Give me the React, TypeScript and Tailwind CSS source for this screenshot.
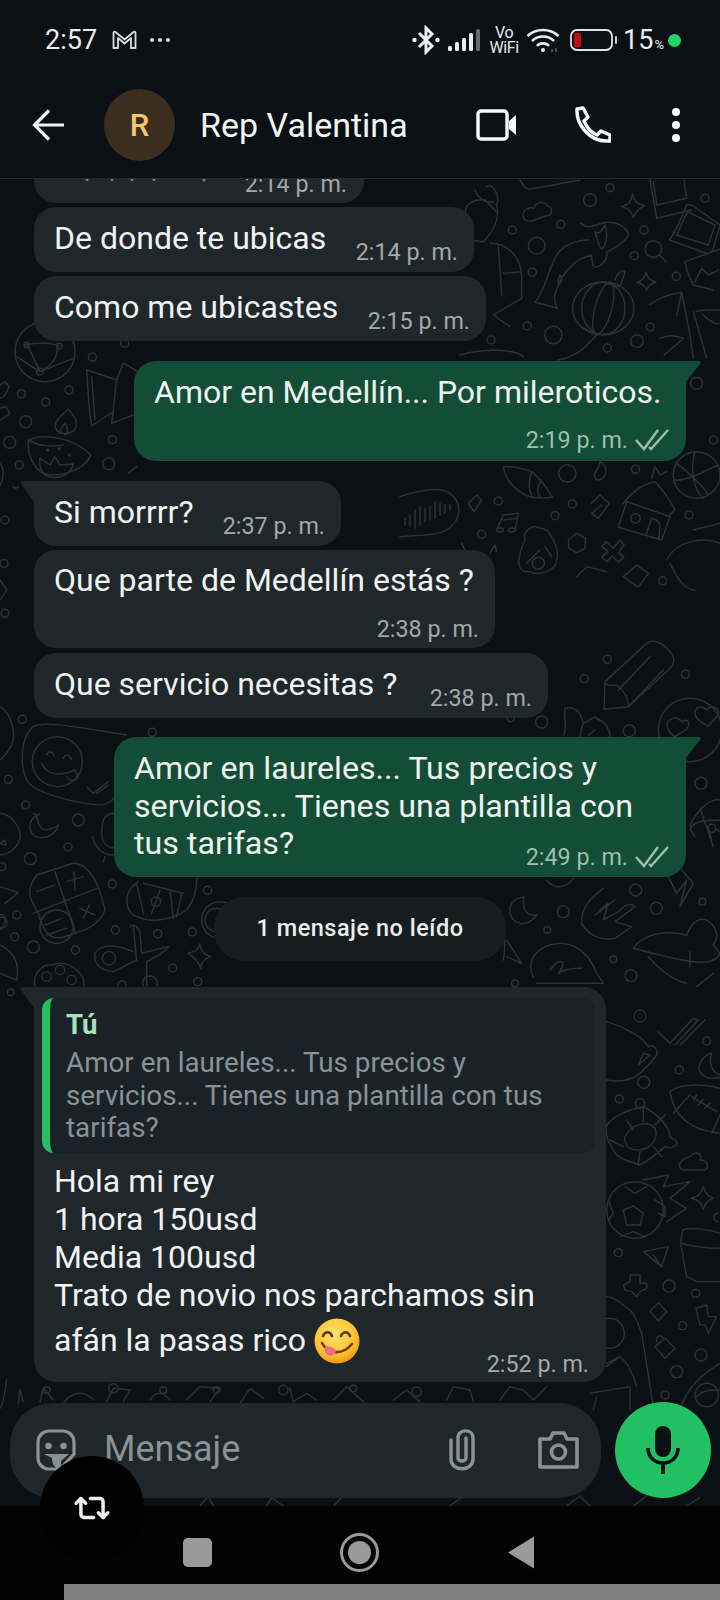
import React from "react";
import { Repeat2 } from "lucide-react";

function Dots({ pts }: { pts: [number, number, number][] }) {
  return (
    <>
      {pts.map(([x, y, r], i) => (
        <circle key={i} cx={x} cy={y} r={r} />
      ))}
    </>
  );
}

function Doodles() {
  return (
    <svg className="absolute left-0 top-0" width="720" height="1600" viewBox="0 0 720 1600" fill="none" stroke="#2d3235" strokeWidth="4.4" strokeLinecap="round" strokeLinejoin="round">
      {/* top right */}
      <g transform="translate(460 175) scale(0.3333)">
        <Dots pts={[[390,75,19],[450,38,12],[157,165,12],[302,148,12],[230,212,25],[217,292,12],[552,165,12],[523,242,12],[649,304,12],[735,70,12],[202,453,12],[280,480,26],[93,495,12],[571,456,12],[531,498,19],[442,519,12]]} />
        <path d="M518 56 C522 80 535 90 555 92 C535 100 525 110 520 128 C515 108 505 100 485 95 C505 90 515 80 518 56Z" />
        <path d="M558 292 C562 310 572 318 588 322 C572 326 562 335 560 346 C556 335 546 326 530 322 C546 318 555 310 558 292Z" />
        <path d="M190 115 C195 100 210 95 222 100 C228 78 255 78 262 92 C280 95 278 120 262 122 C245 125 235 130 225 135 C205 145 185 135 190 115Z" />
        <path d="M180 15 C195 40 200 45 215 42 L360 15" />
        <path d="M570 15 L590 130 L695 105 M580 20 L590 90 L680 70 L672 15" />
        <path d="M680 90 C665 130 640 180 628 195 L740 235 C750 238 755 232 760 222 L780 150 L695 90Z M682 110 L650 180 L745 210 L765 150Z" />
        <path d="M675 260 L780 222 M675 260 C680 290 695 320 700 330 L760 345 M705 320 L725 280 L745 300 L775 285" />
        <circle cx="580" cy="222" r="25" /><path d="M598 240 L618 260" />
        <path d="M362 145 C385 165 400 150 440 142 C480 140 505 165 505 180 C495 205 460 220 440 232 C445 255 420 280 400 275 C395 260 395 250 395 240 C350 250 320 280 300 320 C280 360 280 375 292 400 L225 382 C255 350 265 280 290 240 C310 210 350 195 385 195" />
        <path d="M405 170 C420 180 425 165 435 150 C445 180 440 210 425 222 C415 215 412 190 405 170Z M300 300 C295 310 292 320 298 328 C305 320 308 310 300 300Z" />
        <ellipse cx="430" cy="400" rx="92" ry="80" /><ellipse cx="430" cy="400" rx="65" ry="78" /><ellipse cx="430" cy="400" rx="25" ry="80" transform="rotate(15 430 400)" />
        <path d="M435 325 L480 335 L495 290 C485 282 470 295 465 315 M375 460 L410 480 L385 505 C365 530 330 550 295 555" />
        <path d="M570 388 C600 365 630 360 665 352 L650 420 M600 490 C620 480 645 480 670 490 C650 510 630 525 612 540 M665 352 L690 480 L700 550 M700 410 L740 550 M710 410 C735 400 760 405 780 405 M730 420 C750 440 770 450 780 445" />
        <path d="M80 35 C100 25 120 60 110 90 C120 130 100 170 70 200 L30 195 C30 170 15 130 15 115 C15 90 40 70 75 75 L110 110 M45 45 C55 70 70 85 100 80" />
        <path d="M90 205 C140 205 180 240 185 300 L185 370 L100 420 L150 455 M115 215 L125 360 M130 295 L185 290" />
        <path d="M0 540 C50 525 150 515 190 545" />
      </g>
      {/* middle right and center */}
      <g transform="translate(400 350) scale(0.3333)">
        <Dots pts={[[502,370,26],[707,358,12],[295,453,12],[517,462,12],[465,497,12],[245,553,12],[940,270,12],[890,100,18],[867,495,12],[788,692,12]]} />
        <path d="M310 350 C340 350 370 355 395 365 C420 385 435 405 458 442 C430 445 400 445 375 435 C340 415 315 385 310 350Z M395 365 C385 395 385 420 395 435 M425 390 C410 410 410 430 420 442" />
        <path d="M600 335 C625 345 625 390 590 390 C570 370 600 360 600 335Z" />
        <path d="M655 532 L680 455 L810 500 L785 570Z M668 462 C700 420 735 400 765 395 C790 420 815 460 825 478 L810 495 M740 550 L755 505 C780 510 785 525 775 568" />
        <circle cx="707" cy="505" r="14" /><path d="M755 385 L765 350 L780 375 L800 365" />
        <circle cx="890" cy="375" r="70" /><path d="M830 340 C870 370 920 420 925 435 M885 305 C870 360 880 420 910 445 M825 390 C860 395 920 360 955 345" />
        <path d="M0 440 C60 420 120 410 150 430 C190 460 185 520 130 545 C90 560 40 555 0 560" />
        <path d="M15 505 L15 525 M30 495 L30 530 M45 480 L45 535 M60 470 L60 525 M75 475 L75 515 M90 470 L90 510 M105 455 L105 505 M120 460 L120 495 M135 465 L135 490 M150 465 L150 480" />
        <path d="M230 435 L205 460 L222 485 L245 450 Z" />
        <path d="M290 540 L310 495 L355 490 L345 540 M310 510 L350 505" /><ellipse cx="300" cy="540" rx="10" ry="6" /><ellipse cx="335" cy="540" rx="10" ry="6" />
        <path d="M505 570 L530 550 L557 565 L555 595 L530 608 L507 595Z" />
        <path d="M605 590 L618 575 L640 595 L660 570 L672 585 L655 608 L672 622 L655 636 L637 618 L620 635 L605 620 L625 605Z" />
        <path d="M575 460 L600 435 L628 460 L595 505 L575 490 L605 465" />
        <path d="M375 570 C365 545 400 520 420 535 C450 530 480 600 470 630 C470 660 420 680 390 665 C360 670 350 640 360 615 C360 600 370 585 375 570Z" />
        <circle cx="415" cy="640" r="18" /><path d="M420 600 L380 640 M435 590 L455 620" />
        <path d="M185 580 L195 600 M270 610 L285 585 L290 605" />
        <path d="M530 680 L560 650 L620 665 M670 680 L710 645 L745 670 L715 712Z" />
        <path d="M800 630 C830 570 910 560 960 580 M810 640 C830 680 850 720 885 720 M880 540 L960 520" />
      </g>
      <g transform="translate(500 640) scale(0.3333)">
        <Dots pts={[[603,430,18],[388,272,18],[322,58,12],[253,116,12],[556,103,12],[125,246,18],[32,235,10],[407,750,18],[469,805,18],[607,785,10],[190,815,18],[142,870,10],[340,958,10],[393,1007,18],[45,1030,10]]} />
        <path d="M315 125 L440 10 C460 -5 490 10 510 35 C530 60 520 75 505 90 L385 200 L312 208 Z M355 150 L450 50 M395 190 L490 90 M315 130 C330 140 340 135 350 135 C370 150 385 170 385 200" />
        <path d="M190 285 C205 270 190 230 195 205 C230 195 245 225 250 250 C270 240 285 225 290 235 C320 250 330 270 330 290 M240 290 C245 270 245 260 250 250 M265 285 L285 270" />
        <circle cx="570" cy="270" r="95" />
        <path d="M525 290 C500 275 490 245 520 235 C535 230 540 240 545 245 C560 235 575 245 560 268 Z M625 258 C595 245 575 225 590 205 C605 195 615 205 620 210 C635 190 660 205 655 225Z" />
        <path d="M585 590 C560 560 570 545 605 505 C620 490 640 475 660 480 M570 570 C580 545 605 540 660 540 M600 505 L640 620 M625 560 L635 600 M645 565 L660 575" /><circle cx="635" cy="565" r="12" />
        <path d="M45 780 C20 800 25 840 60 850 C80 855 100 840 110 825 C85 830 65 815 72 770 C62 772 52 775 45 780Z" />
        <path d="M310 745 C280 770 240 800 245 850 C260 880 300 905 345 895 L395 860 L345 845 L405 800 C395 790 380 790 355 815 L310 840 L325 790 L300 810 M285 825 L345 780" />
        <path d="M500 700 L530 760 L560 720 L540 800 L580 730 L545 690" />
        <path d="M400 925 C430 880 500 870 560 885 C570 860 590 830 620 840 C650 860 660 890 640 915 L660 940 C640 985 570 970 400 925Z M570 980 L570 935 M445 950 C490 1000 520 1020 560 1030 M640 1000 L590 1040" />
        <path d="M100 1010 C80 970 100 930 150 915 C200 900 260 920 290 1000 L310 1030 L110 1030 M150 990 C180 950 205 960 175 1000 C195 985 230 985 245 985" />
        <path d="M140 720 C170 760 210 730 220 715 M20 900 L65 970 L20 950 M0 810 C10 880 20 900 10 960" />
      </g>
      {/* left middle */}
      <g transform="translate(0 700) scale(0.3333)">
        <Dots pts={[[67,58,12],[25,238,12],[77,315,12],[235,360,18],[204,441,12],[91,476,18],[337,552,12],[50,645,12],[44,711,12],[100,741,18],[226,750,12],[346,690,12],[473,701,12],[577,696,12],[623,571,12],[518,804,12],[593,845,12],[366,855,12],[32,877,10],[457,97,12],[5,500,12]]} />
        <path d="M100 80 C130 60 250 85 380 105 M100 80 C60 110 60 200 80 240 C100 280 230 310 300 315 C320 315 340 300 345 290" />
        <circle cx="172" cy="185" r="75" />
        <path d="M140 165 C145 150 160 155 162 168 M190 175 C195 160 210 165 214 178 M125 190 C140 225 180 230 225 210 L235 230 C225 245 210 245 200 230" />
        <path d="M262 262 L280 280 L325 245 M290 280 L325 255" />
        <path d="M100 340 C115 345 110 370 125 385 C140 395 160 385 175 375 C165 420 90 430 90 380 C90 365 95 350 118 342" />
        <path d="M345 340 C320 340 305 350 305 400 C305 430 320 440 340 445 M278 410 C285 445 310 465 340 465 M315 470 L310 485" />
        <path d="M0 340 C40 345 65 390 60 415 C50 450 20 465 0 465 M0 430 L15 420 L18 435Z" />
        <path d="M110 525 L220 490 C270 490 300 560 315 630 C300 670 260 690 225 700 C170 720 140 730 115 640 C95 600 70 580 110 525Z M165 515 L225 695 M100 640 L290 565" />
        <circle cx="170" cy="680" r="50" />
        <path d="M110 575 L165 555 M200 545 L250 530 M222 515 L225 570 M240 625 L285 645 M268 615 L250 655 M135 675 L185 655 M140 705 L200 685" />
        <path d="M0 560 L55 578 L15 610 M0 690 C20 670 20 640 0 645" />
        <path d="M415 545 C375 570 370 620 400 645 C440 670 510 665 560 630 C585 600 590 565 590 535 M410 550 L430 640 M480 570 L455 640 M510 570 L520 655 M545 580 L530 650 M430 550 L490 565 L550 580" />
        <circle cx="468" cy="605" r="14" />
        <path d="M390 680 C400 670 415 680 420 700 L425 760 L505 740 C500 750 470 770 440 785 L440 860 M400 680 L410 780 L340 815 C280 810 270 760 300 745 C330 730 365 740 400 755" />
        <circle cx="327" cy="775" r="20" /><circle cx="450" cy="850" r="22" />
        <path d="M600 732 C604 755 612 765 632 770 C612 775 604 785 602 805 C596 785 586 775 565 760 C585 755 595 750 600 732Z" />
        <path d="M105 860 C95 820 130 790 155 795 C190 780 230 800 250 835 L252 860" />
        <circle cx="140" cy="830" r="14" /><circle cx="180" cy="810" r="14" /><circle cx="215" cy="840" r="14" />
        <path d="M0 735 C40 755 60 790 50 840 L0 820" />
        <circle cx="5" cy="668" r="16" />
        <circle cx="660" cy="660" r="55" /><circle cx="650" cy="660" r="35" />
        <path d="M40 120 C45 70 20 30 0 20 M0 180 C20 160 30 150 40 120" />
      </g>
      {/* bottom right */}
      <g transform="translate(590 1000) scale(0.3333)">
        <Dots pts={[[150,48,18],[350,123,12],[268,210,12],[161,247,18],[88,297,12],[150,310,14],[85,758,12],[237,858,18],[317,880,12],[278,977,12],[333,1065,18],[260,1115,18],[225,1185,12]]} />
        <path d="M50 65 C100 80 160 110 175 140 C190 130 205 150 200 165 C180 195 160 210 150 220 C120 245 80 245 50 240 M145 195 L180 165 L160 160Z" />
        <path d="M205 95 L240 130 L310 55 L325 60 L255 135 M270 135 L345 60" />
        <path d="M365 160 C340 165 320 195 330 215 C345 240 370 235 390 232 M365 160 C355 190 365 215 390 225" />
        <path d="M240 275 C270 250 340 250 390 265 M240 275 C250 340 290 390 390 400 M300 285 L250 340 M390 345 L365 400 M305 290 L380 335 M320 285 L310 300 M340 298 L325 315 M360 310 L345 325" />
        <path d="M50 375 C70 350 110 330 160 320 C200 340 240 380 240 410 C250 420 265 420 260 435 C240 450 230 440 225 440 C190 470 160 490 150 495 L135 490 C100 480 75 470 65 440 C50 420 45 400 50 375Z M105 410 C125 370 175 360 195 385 C205 410 190 450 140 450 C120 450 100 435 105 410Z M110 360 L130 390 M160 325 L160 365 M195 375 L225 345 M100 440 L60 420 M150 455 L145 490 M190 440 L215 470" />
        <path d="M270 490 C280 470 300 475 305 465 C325 450 340 470 330 480 C355 480 360 510 340 510 L285 510 C270 510 265 500 270 490Z" />
        <path d="M340 560 C345 580 355 590 370 595 C355 600 345 610 340 628 C335 610 325 600 305 595 C325 590 335 580 340 560Z" />
        <circle cx="135" cy="630" r="85" />
        <path d="M100 630 L130 618 L160 640 L150 675 L110 675Z M105 560 L135 580 L170 560 M195 600 L225 620 L225 650 L205 640 M55 600 L70 640 L55 660 M90 710 L130 695 L165 710" />
        <path d="M160 540 L235 525 L220 560 L300 545 L240 595 L290 625 L230 665" />
        <path d="M160 755 L235 740 L215 800Z M190 765 L215 800" />
        <path d="M278 690 C310 680 360 690 390 700 M278 690 L272 730 L290 830 L320 845 L390 845 M272 730 C310 740 360 745 390 745 M385 640 C370 640 365 660 385 665" />
        <path d="M120 825 L150 825 L150 850 L170 850 L170 865 L150 875 L140 890 L125 875 L105 870 L100 855 L120 845Z" />
        <path d="M205 908 L230 935 L205 962 L180 935Z" />
        <path d="M318 925 L350 915 L355 950 L380 950 L355 1000 L345 975 L330 975Z" />
        <path d="M195 1040 L225 1015 L255 1045 L225 1075Z M200 1025 C195 1005 215 1005 220 1015" />
        <path d="M48 890 C80 890 100 920 120 930 C140 950 145 975 155 1000 L190 1220 M48 1100 L90 1070 C110 1085 130 1120 140 1160 M90 1070 L50 1090" />
        <circle cx="58" cy="1000" r="45" />
        <path d="M270 1230 C290 1160 340 1120 390 1090 M320 1190 C340 1170 360 1170 390 1170" />
        <circle cx="350" cy="1185" r="35" />
        <path d="M0 1180 L120 1160 L120 1230 M10 1230 L20 1190" />
      </g>
      {/* upper left */}
      <g transform="translate(0 340) scale(0.3333)">
        <Dots pts={[[374,10,12],[277,52,12],[64,161,12],[207,150,12],[137,186,12],[77,245,18],[29,307,18],[337,299,12],[58,375,12],[326,371,18]]} />
        <circle cx="135" cy="35" r="90" />
        <path d="M50 50 C80 70 110 90 120 95 L220 55 M80 10 L120 95 M170 15 C180 50 150 80 120 95 M75 15 C120 5 160 10 178 18" />
        <circle cx="80" cy="15" r="8" /><circle cx="178" cy="18" r="8" /><circle cx="120" cy="95" r="10" />
        <path d="M260 90 L350 120 L370 70 C395 80 410 95 420 100 M260 90 C265 150 265 210 275 258 L340 215 L335 250 L400 225 M350 120 L335 250 M275 110 L285 240 M0 135 L15 125 L28 140 L12 170 L0 175 M0 205 L18 200 L30 222 L0 240" />
        <path d="M205 208 C180 230 155 250 170 270 C180 285 220 285 228 260 C235 240 220 225 205 208Z" />
        <path d="M180 280 C180 265 190 255 195 250 C205 265 205 285 195 285" />
        <path d="M85 300 C130 280 220 290 272 345 C260 380 210 405 150 405 C110 405 80 350 85 300Z M85 300 C120 320 150 320 190 315" />
        <circle cx="143" cy="330" r="3" /><circle cx="178" cy="326" r="3" /><circle cx="208" cy="345" r="3" />
        <path d="M120 355 L150 375 L165 350 L180 375 L220 372 C215 400 185 415 155 412 C130 410 115 385 120 355Z" />
        <path d="M0 370 C15 390 10 420 0 435 M385 400 L410 380 M40 440 C45 445 50 445 55 440" />
      </g>
      {/* left gap rows */}
      <g transform="translate(0 480) scale(0.3333)">
        <Dots pts={[[15,400,12],[12,250,12],[15,120,12]]} />
        <path d="M0 300 L20 330 L0 360" />
      </g>
      {/* bottom strip */}
      <g transform="translate(0 1380) scale(0.3333)">
        <path d="M55 70 L60 30 L70 65 M120 65 L130 25 L160 60 M190 70 C210 40 250 25 280 60 M320 65 L340 25 L390 30 L370 65 M450 60 C470 30 490 35 510 60 M560 60 L600 20 L660 25 L630 65 M720 70 L750 25 L790 55 M870 25 L880 65 L920 40 L950 60 M1000 60 L1040 20 L1090 65 M1180 60 L1220 30 L1260 65 M1340 60 L1360 20 L1410 30 L1420 65 M1500 60 L1530 20 L1570 30 L1600 60 L1640 20" />
        <Dots pts={[[140,30,10],[340,25,14],[490,30,10],[650,30,10],[850,30,14],[1060,25,10],[1250,35,14]]} />
        <path d="M20 0 C15 40 10 70 0 85" />
      </g>
      <g transform="translate(0 1496) scale(0.3333)">
        <path d="M190 30 L215 0 M600 30 L625 0 L640 30 M800 30 L815 5 L850 30 M1000 30 L1030 0 M1350 30 L1390 0 M1700 30 L1740 0 L1770 30 M1900 30 L1940 0 M2060 30 L2100 5" />
      </g>
    </svg>
  );
}

function ReceivedTail() {
  return (
    <svg className="absolute -left-[14px] top-0" width="16" height="24" viewBox="0 0 16 24">
      <path d="M16 0 H3 Q-1 0 1.5 3.5 L16 24 Z" fill="#1f272a" />
    </svg>
  );
}

function SentTail() {
  return (
    <svg className="absolute -right-[15px] top-0" width="16" height="24" viewBox="0 0 16 24">
      <path d="M0 0 H13 Q17 0 14.5 3.5 L0 22 Z" fill="#144d37" />
    </svg>
  );
}

function Checks() {
  return (
    <svg width="34" height="22" viewBox="0 0 34 22" fill="none" stroke="#9bbfae" strokeWidth="2.4">
      <path d="M1 11 L9 20 L23 1" />
      <path d="M14 18 L16 20 L33 1" />
    </svg>
  );
}

function Time({ children, sent }: { children: React.ReactNode; sent?: boolean }) {
  return (
    <span className={`block text-[23.3px] leading-[28px] whitespace-nowrap ${sent ? "text-[#9bbfae]" : "text-[#a3a8aa]"}`}>{children}</span>
  );
}

function Received({ text, time, w, h, tail, twoRow }: { text: string; time: string; w: string; h: string; tail?: boolean; twoRow?: boolean }) {
  return (
    <div className={`relative ${w} ${h} bg-[#1f272a] ${tail ? "rounded-[22px] rounded-tl-none" : "rounded-[22px]"} pl-[20px] pr-[16px] ${twoRow ? "pt-[11px] pb-[5px] flex flex-col justify-between" : "pt-[12px] pb-[6px] flex justify-between items-end"}`}>
      {tail && <ReceivedTail />}
      <span className={`text-[32px] leading-[38px] text-[#f1f2f2] ${twoRow ? "" : "self-start"}`}>{text}</span>
      <span className={twoRow ? "self-end" : ""}><Time>{time}</Time></span>
    </div>
  );
}

function Sent({ lines, time, w, h, timeMt, size }: { lines: string[]; time: string; w: string; h: string; timeMt: string; size: string }) {
  return (
    <div className={`relative self-end ${w} ${h} bg-[#144d37] rounded-[22px] rounded-tr-none pl-[20px] pr-[17px] pt-[13px] flex flex-col`}>
      <SentTail />
      {lines.map((l) => (
        <span key={l} className={`${size} leading-[37.5px] text-[#eef3f0] whitespace-nowrap`}>{l}</span>
      ))}
      <span className={`self-end flex items-center gap-[7px] ${timeMt}`}>
        <Time sent>{time}</Time>
        <Checks />
      </span>
    </div>
  );
}

function YumEmoji() {
  return (
    <svg className="inline-block align-middle ml-[8px] -mt-[4px]" width="46" height="46" viewBox="0 0 46 46">
      <defs>
        <radialGradient id="yum" cx="45%" cy="35%" r="70%">
          <stop offset="0%" stopColor="#ffe36a" />
          <stop offset="65%" stopColor="#fdc232" />
          <stop offset="100%" stopColor="#ee8f12" />
        </radialGradient>
      </defs>
      <circle cx="23" cy="23" r="22.5" fill="url(#yum)" />
      <path d="M9 18 C11 13 16 13 18 18 M27 18 C29 13 34 13 36 18" stroke="#5b3a10" strokeWidth="2.6" fill="none" strokeLinecap="round" />
      <path d="M8 25 C14 36 28 38 38 26" stroke="#6a3d10" strokeWidth="2.6" fill="none" strokeLinecap="round" />
      <path d="M11 29 C16 27 20 30 22 33 C21 39 13 39 11 34 Z" fill="#f26d7c" />
    </svg>
  );
}

function StatusBar() {
  return (
    <div className="h-[76px] flex items-center justify-between pl-[45px] pr-[39px] pt-[4px]">
      <div className="flex items-center">
        <span className="text-[27px] leading-none text-[#ececec]">2:57</span>
        <svg className="ml-[15px]" width="25" height="20" viewBox="0 0 25 20" fill="none" stroke="#dcdcdc" strokeWidth="1.8" strokeLinejoin="round">
          <path d="M1.5 18 V3 Q1.5 1 3.5 2 L12.5 9.5 L21.5 2 Q23.5 1 23.5 3 V18 H19 V8 L12.5 13.5 L6 8 V18Z" />
        </svg>
        <span className="flex gap-[4px] ml-[13px]">
          <i className="w-[4px] h-[4px] rounded-full bg-[#dcdcdc]" />
          <i className="w-[4px] h-[4px] rounded-full bg-[#dcdcdc]" />
          <i className="w-[4px] h-[4px] rounded-full bg-[#dcdcdc]" />
        </span>
      </div>
      <div className="flex items-center">
        <svg width="28" height="30" viewBox="0 0 28 30" fill="none" stroke="#f0f0f0" strokeWidth="3">
          <path d="M7 8 L20 21 L14 27 V3 L20 9 L7 22" />
          <circle cx="2.5" cy="15" r="2.2" fill="#f0f0f0" stroke="none" />
          <circle cx="25.5" cy="15" r="2.2" fill="#f0f0f0" stroke="none" />
        </svg>
        <svg className="ml-[8px]" width="33" height="24" viewBox="0 0 33 24" fill="#ececec">
          <rect x="0" y="18" width="4" height="5" rx="1.5" />
          <rect x="7" y="14" width="4" height="9" rx="1.5" />
          <rect x="14" y="10" width="4" height="13" rx="1.5" />
          <rect x="21" y="5" width="4" height="18" rx="1.5" />
          <rect x="28" y="1" width="4" height="22" rx="1.5" fill="#6a6a6a" />
        </svg>
        <span className="ml-[7px] w-[32px] flex flex-col text-[#e8e8e8] text-[16px] leading-[15px] text-center tracking-tight">
          <span>Vo</span><span>WiFi</span>
        </span>
        <svg className="ml-[6px]" width="34" height="26" viewBox="0 0 34 26" fill="none" stroke="#ececec" strokeWidth="2.6">
          <path d="M1.5 9 C10 1 24 1 32.5 9" />
          <path d="M6 14 C12 8 22 8 28 14" />
          <path d="M11 19 C14 15.5 20 15.5 23 19" />
          <circle cx="17" cy="23" r="2" fill="#ececec" stroke="none" />
          <path d="M26 22 V25 M30 21 V25" strokeWidth="1" stroke="#888" />
        </svg>
        <svg className="ml-[10px]" width="48" height="22" viewBox="0 0 48 22" fill="none">
          <rect x="1" y="1" width="41" height="20" rx="6" stroke="#e4e4e4" strokeWidth="1.8" />
          <rect x="4" y="4" width="7" height="14" rx="1.5" fill="#c00d10" />
          <rect x="45" y="7" width="2" height="8" rx="1" fill="#d0d0d0" />
        </svg>
        <span className="ml-[5px] text-[27px] leading-none text-[#ececec]">15</span>
        <span className="ml-[1px] text-[13px] leading-none text-[#ececec] mt-[8px]">%</span>
        <span className="ml-[4px] w-[13px] h-[13px] rounded-full bg-[#25d366]" />
      </div>
    </div>
  );
}

function Header() {
  return (
    <div className="h-[103px] flex items-center border-b border-[#23282b] bg-[#0b1014] pb-[5px]">
      <svg className="ml-[32px]" width="33" height="32" viewBox="0 0 33 32" fill="none" stroke="#f4f4f4" strokeWidth="3.2">
        <path d="M32 16 H3 M17 1.5 L2.5 16 L17 30.5" />
      </svg>
      <div className="ml-[39px] w-[71px] h-[72px] rounded-full bg-[#3b2e1f] flex items-center justify-center text-[#f6c56d] text-[31px] font-medium pt-[3px]">R</div>
      <span className="ml-[25px] text-[34px] leading-none text-[#f4f4f4]">Rep Valentina</span>
      <svg className="ml-[68px]" width="41" height="32" viewBox="0 0 41 32" fill="none">
        <rect x="2" y="2" width="29" height="28" rx="3" stroke="#fafafa" strokeWidth="3.4" />
        <path d="M33 12 L40 6 V26 L33 20Z" fill="#fafafa" />
      </svg>
      <svg className="ml-[57px]" width="37" height="37" viewBox="0 0 37 37" fill="none" stroke="#fafafa" strokeWidth="3.4" strokeLinejoin="round">
        <path d="M3 3 L9 2 L14 11 L10 15 C13 22 18 27 23 29 L27 25 L36 29 V35 H32 C16 35 2 19 3 3 Z" />
      </svg>
      <span className="ml-[61px] flex flex-col gap-[5px]">
        <i className="w-[8px] h-[8px] rounded-full bg-[#fafafa]" />
        <i className="w-[8px] h-[8px] rounded-full bg-[#fafafa]" />
        <i className="w-[8px] h-[8px] rounded-full bg-[#fafafa]" />
      </span>
    </div>
  );
}

function InputRow() {
  return (
    <div className="flex items-center pl-[10px]">
      <div className="w-[591px] h-[95px] rounded-[42px] bg-[#1f272a] flex items-center pl-[26px] pr-[22px]">
        <svg width="40" height="42" viewBox="0 0 40 42" fill="none" stroke="#8a9296" strokeWidth="3.2">
          <path d="M13 2 H27 C33 2 38 7 38 13 V25 L24 40 H13 C7 40 2 35 2 29 V13 C2 7 7 2 13 2Z" />
          <circle cx="12.5" cy="17" r="3.2" fill="#8a9296" stroke="none" />
          <circle cx="27.5" cy="17" r="3.2" fill="#8a9296" stroke="none" />
          <path d="M8 25 H33 L25 32 V39 C20 41 16 36 16 29 Z" fill="#8a9296" stroke="none" />
        </svg>
        <span className="ml-[28px] text-[36px] leading-none text-[#8a9296] -mt-[2px]">Mensaje</span>
        <svg className="ml-auto" width="26" height="42" viewBox="0 0 26 42" fill="none" stroke="#8a9296" strokeWidth="3.4" strokeLinecap="round">
          <path d="M17 9 V29 C17 33 9 33 9 29 V9 C9 -0.5 24 -0.5 24 9 V30 C24 43 2 43 2 30 V11" />
        </svg>
        <svg className="ml-[63px]" width="41" height="38" viewBox="0 0 41 38" fill="none" stroke="#8a9296" strokeWidth="3.6" strokeLinejoin="round">
          <path d="M2 8 H12 L15 2 H26 L29 8 H39 V36 H2Z" />
          <circle cx="20.5" cy="21" r="7" />
        </svg>
      </div>
      <div className="ml-[14px] w-[96px] h-[96px] rounded-full bg-[#21c063] flex items-center justify-center">
        <svg width="34" height="48" viewBox="0 0 34 48" fill="none">
          <rect x="9" y="0" width="16" height="31" rx="8" fill="#0b1014" />
          <path d="M2 22 C2 42 32 42 32 22" stroke="#0b1014" strokeWidth="3.6" />
          <rect x="15" y="36" width="4" height="12" fill="#0b1014" />
        </svg>
      </div>
    </div>
  );
}

export default function App() {
  return (
    <div className="relative w-[720px] h-[1600px] overflow-hidden bg-[#0b1014] font-['Roboto',sans-serif]">
      <Doodles />
      <div className="relative flex flex-col h-full">
        <div className="bg-[#0b1014]">
          <StatusBar />
          <Header />
        </div>
        <div className="flex-1 flex flex-col px-[34px]">
          <div className="relative w-[330px] h-[24px] bg-[#1f272a] rounded-b-[22px] overflow-hidden flex justify-end pr-[17px]">
            <svg className="absolute left-[50px] top-0" width="170" height="4" viewBox="0 0 170 4" fill="#7a8084">
              <circle cx="3" cy="0.5" r="1.5" /><circle cx="28" cy="0.5" r="1.5" /><circle cx="48" cy="0.5" r="1.5" /><circle cx="70" cy="0.5" r="1.5" /><circle cx="120" cy="1" r="1.5" />
            </svg>
            <span className="-mt-[9px]"><Time>2:14 p. m.</Time></span>
          </div>
          <div className="mt-[4px] flex flex-col gap-[4px]">
            <Received text="De donde te ubicas" time="2:14 p. m." w="w-[440px]" h="h-[65px]" />
            <Received text="Como me ubicastes" time="2:15 p. m." w="w-[452px]" h="h-[65px]" />
          </div>
          <div className="mt-[20px] flex justify-end">
            <Sent lines={["Amor en Medellín... Por mileroticos."]} size="text-[32px]" time="2:19 p. m." w="w-[552px]" h="h-[100px]" timeMt="mt-[14px]" />
          </div>
          <div className="mt-[20px] flex flex-col">
            <Received text="Si morrrr?" time="2:37 p. m." w="w-[307px]" h="h-[65px]" tail />
            <div className="mt-[4px]"><Received text="Que parte de Medellín estás ?" time="2:38 p. m." w="w-[461px]" h="h-[98px]" twoRow /></div>
            <div className="mt-[5px]"><Received text="Que servicio necesitas ?" time="2:38 p. m." w="w-[514px]" h="h-[65px]" /></div>
          </div>
          <div className="mt-[19px] flex justify-end">
            <Sent lines={["Amor en laureles... Tus precios y", "servicios... Tienes una plantilla con", "tus tarifas?"]} size="text-[32.2px]" time="2:49 p. m." w="w-[572px]" h="h-[140px]" timeMt="-mt-[20px]" />
          </div>
          <div className="mt-[20px] self-center w-[292px] h-[64px] rounded-[30px] bg-[#171c1f] flex items-center justify-center">
            <span className="text-[23.5px] font-medium tracking-[0.5px] text-[#eceeee]">1 mensaje no leído</span>
          </div>
          <div className="relative mt-[26px] w-[572px] h-[395px] bg-[#1f272a] rounded-[22px] rounded-tl-none">
            <ReceivedTail />
            <div className="pt-[11px] pl-[8px] pr-[11px]">
              <div className="h-[155px] bg-[#1a2227] rounded-[12px] border-l-[8px] border-[#21c063] pl-[16px] pt-[9px] flex flex-col">
                <span className="text-[27.5px] leading-[36px] font-bold text-[#a6e3bd]">Tú</span>
                <span className="w-[490px] text-[27.8px] leading-[32.5px] text-[#8a9296] mt-[4px]">Amor en laureles... Tus precios y servicios... Tienes una plantilla con tus tarifas?</span>
              </div>
            </div>
            <div className="pl-[20px] pr-[17px] flex flex-col mt-[9px]">
              <span className="text-[32px] leading-[38px] text-[#f1f2f2]">Hola mi rey</span>
              <span className="text-[32px] leading-[38px] text-[#f1f2f2]">1 hora 150usd</span>
              <span className="text-[32px] leading-[38px] text-[#f1f2f2]">Media 100usd</span>
              <span className="text-[32px] leading-[38px] text-[#f1f2f2]">Trato de novio nos parchamos sin</span>
              <span className="text-[32px] leading-[53px] text-[#f1f2f2]">afán la pasas rico<YumEmoji /></span>
              <span className="self-end -mt-[17px]"><Time>2:52 p. m.</Time></span>
            </div>
          </div>
          <div className="flex-1" />
        </div>
        <div className="absolute left-0 top-[1402px] w-full"><InputRow /></div>
        <div className="h-[94px] bg-[#020203] flex flex-col">
          <div className="flex-1 flex items-center justify-center pt-[14px] pr-[3px]">
            <span className="w-[29px] h-[29px] rounded-[5px] bg-[#9a9a9a]" />
            <span className="ml-[128px] w-[39px] h-[39px] rounded-full border-[3px] border-[#9a9a9a] flex items-center justify-center">
              <i className="w-[23px] h-[23px] rounded-full bg-[#9a9a9a]" />
            </span>
            <svg className="ml-[128px]" width="27" height="33" viewBox="0 0 27 33"><path d="M27 0.5 V32.5 L1 16.5Z" fill="#9a9a9a" /></svg>
          </div>
          <div className="h-[16px] ml-[64px] bg-[#808080]" />
        </div>
      </div>
      <div className="absolute left-[40px] top-[1456px] w-[104px] h-[104px] rounded-full bg-black flex items-center justify-center">
        <Repeat2 className="text-[#f0f0f0]" size={38} strokeWidth={2.2} />
      </div>
    </div>
  );
}
